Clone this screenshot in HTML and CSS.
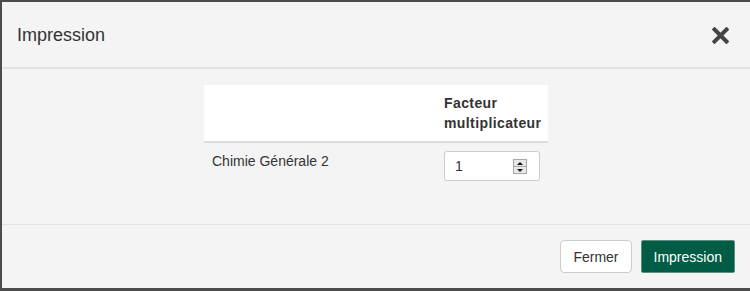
FILE: index.html
```html
<!DOCTYPE html>
<html lang="fr">
<head>
    <meta charset="UTF-8">
    <title>Impression</title>
    <link rel="stylesheet" href="styles.css">
</head>
<body>
    <div class="backdrop">
        <div class="modal">
            <div class="modal-header">
                <h4 class="modal-title">Impression</h4>
                <button class="close" type="button" aria-label="Fermer">
                    <svg width="17" height="17" viewBox="0 0 17 17">
                        <path d="M2.5 2.5 L14.5 14.5 M14.5 2.5 L2.5 14.5" stroke="#444" stroke-width="4" stroke-linecap="square"/>
                    </svg>
                </button>
            </div>

            <div class="modal-body">
                <table class="coef-table">
                    <thead>
                        <tr>
                            <th class="col-name"></th>
                            <th class="col-coef">Facteur multiplicateur</th>
                        </tr>
                    </thead>
                    <tbody>
                        <tr>
                            <td>Chimie Générale 2</td>
                            <td>
                                <div class="number-input">
                                    <span class="value">1</span>
                                    <span class="spinner">
                                        <span class="spin-up"></span>
                                        <span class="spin-down"></span>
                                    </span>
                                </div>
                            </td>
                        </tr>
                    </tbody>
                </table>
            </div>

            <div class="modal-footer">
                <button class="btn btn-default" type="button">Fermer</button>
                <button class="btn btn-primary" type="button">Impression</button>
            </div>
        </div>
    </div>
</body>
</html>
```

FILE: styles.css
```css
* {
    margin: 0;
    padding: 0;
    box-sizing: border-box;
}

body {
    font-family: 'Liberation Sans', Arial, Helvetica, sans-serif;
    font-size: 14px;
    line-height: 20px;
    color: #333;
    background: #4b4b4b;
    overflow: hidden;
}

.backdrop {
    padding: 2px 0 0 2px;
    height: 291px;
}

.modal {
    background: #f4f4f4;
    width: 748px;
    height: 286px;
    display: flex;
    flex-direction: column;
}

.modal-header {
    height: 67px;
    border-bottom: 2px solid #e3e3e3;
    padding: 0 21px 0 15px;
    display: flex;
    align-items: center;
    justify-content: space-between;
}

.modal-title {
    font-size: 18px;
    font-weight: normal;
    color: #333;
    line-height: 24px;
}

.close {
    background: none;
    border: none;
    width: 17px;
    height: 17px;
    display: flex;
    margin-top: 1px;
}

.modal-body {
    padding: 16px 15px 0;
    height: 155px;
}

.coef-table {
    border-collapse: collapse;
    margin: 0 auto;
    width: 344px;
    table-layout: fixed;
}

.coef-table th {
    background: #fff;
    font-weight: bold;
    text-align: left;
    vertical-align: bottom;
    padding: 8px;
    border-bottom: 2px solid #ddd;
    letter-spacing: 0.4px;
}

.coef-table .col-name {
    width: 232px;
}

.coef-table .col-coef {
    width: 112px;
}

.coef-table td {
    padding: 8px;
    vertical-align: top;
}

.number-input {
    width: 96px;
    height: 30px;
    background: #fff;
    border: 1px solid #ccc;
    border-radius: 3px;
    display: flex;
    align-items: center;
    justify-content: space-between;
    padding: 0 12px 0 10px;
}

.number-input .value {
    font-size: 14px;
    color: #333;
}

.spinner {
    width: 14px;
    height: 15px;
    display: flex;
    flex-direction: column;
    border: 1px solid #a9a9a9;
    background: #e8e8e8;
}

.spin-up,
.spin-down {
    flex: 1;
    position: relative;
}

.spin-up {
    border-bottom: 1px solid #a9a9a9;
}

.spin-up::after,
.spin-down::after {
    content: '';
    position: absolute;
    left: 3px;
    top: 2px;
    border-left: 3px solid transparent;
    border-right: 3px solid transparent;
}

.spin-up::after {
    border-bottom: 3px solid #111;
}

.spin-down::after {
    top: 2px;
    border-top: 3px solid #111;
}

.modal-footer {
    border-top: 1px solid #e3e3e3;
    padding: 15px;
    display: flex;
    justify-content: flex-end;
    gap: 9px;
}

.btn {
    font-family: inherit;
    font-size: 14px;
    line-height: 20px;
    padding: 6px 12px;
    border-radius: 4px;
    border: 1px solid #ccc;
    height: 33px;
}

.btn-default {
    background: #fff;
    color: #333;
}

.btn-primary {
    background: #005c45;
    color: #fff;
    border-color: #5b8f80;
    border-radius: 2px;
}
```
